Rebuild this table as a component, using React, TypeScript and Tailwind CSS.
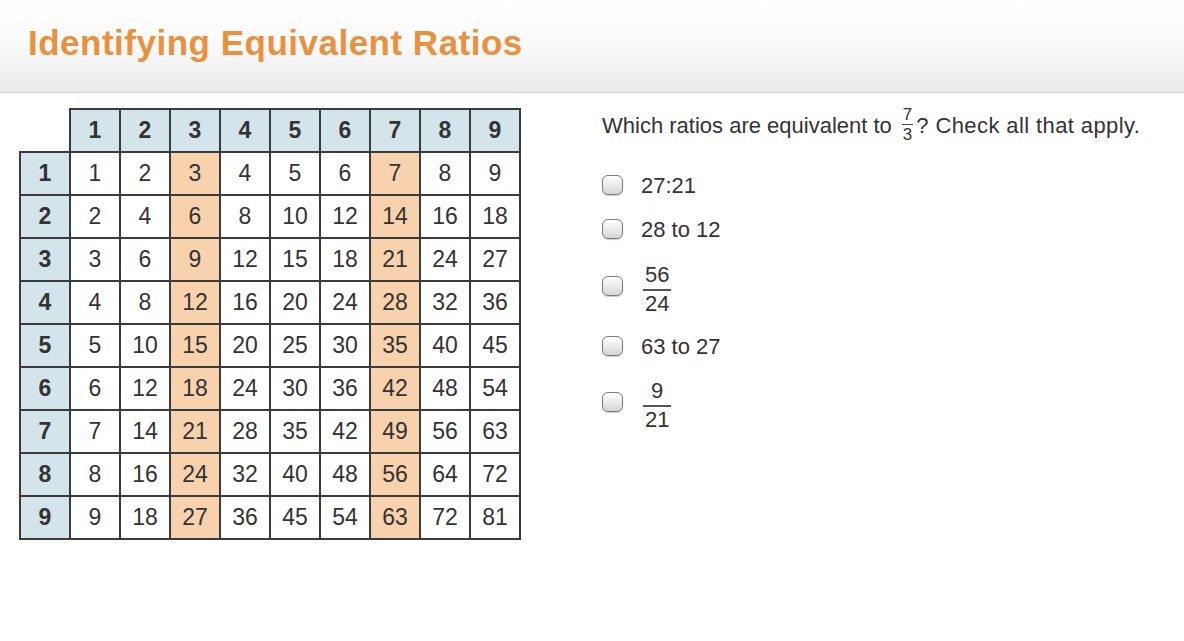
import React from "react";

const HL = new Set([3, 7]);

function Checkbox() {
  return (
    <div className="w-[21px] h-[20px] rounded-[6px] border border-[#7d7d7d] bg-gradient-to-b from-[#ffffff] to-[#d6d6d6] shadow-[0_1px_1px_rgba(0,0,0,0.2)] shrink-0" />
  );
}

function Frac({ n, d }: { n: string; d: string }) {
  return (
    <span className="inline-flex flex-col items-center leading-[22px]">
      <span className="px-[2px] pb-[3px]">{n}</span>
      <span className="px-[2px] pt-[2px] border-t-2 border-[#555] self-stretch text-center">{d}</span>
    </span>
  );
}

export default function App() {
  const nums = [1, 2, 3, 4, 5, 6, 7, 8, 9];
  return (
    <div
      className="w-[1184px] h-[641px] bg-white text-[#333]"
      style={{ fontFamily: '"Liberation Sans", Arial, sans-serif' }}
    >
      <div className="h-[93px] bg-gradient-to-b from-[#ffffff] via-[#fafafa] to-[#e9e9e9] border-b border-[#cfcfcf] flex items-start">
        <h1 className="ml-[28px] mt-[23px] text-[35px] leading-[40px] font-bold text-[#e8923f] tracking-[0.5px]">
          Identifying Equivalent Ratios
        </h1>
      </div>
      <div className="flex">
        <div className="ml-[19px] mt-[15px]">
          <table className="border-collapse table-fixed text-[23px]">
            <tbody>
              <tr className="h-[43px]">
                <td className="w-[50px] p-0" />
                {nums.map((c) => (
                  <td
                    key={c}
                    className="w-[50px] p-0 border-2 border-[#3b3b3b] bg-[#d3e4ea] text-center font-bold"
                  >
                    {c}
                  </td>
                ))}
              </tr>
              {nums.map((r) => (
                <tr key={r} className="h-[43px]">
                  <td className="p-0 border-2 border-[#3b3b3b] bg-[#d3e4ea] text-center font-bold">
                    {r}
                  </td>
                  {nums.map((c) => (
                    <td
                      key={c}
                      className={
                        "p-0 border-2 border-[#3b3b3b] text-center " +
                        (HL.has(c) ? "bg-[#f8d1ad]" : "bg-white")
                      }
                    >
                      {r * c}
                    </td>
                  ))}
                </tr>
              ))}
            </tbody>
          </table>
        </div>
        <div className="ml-[81px] mt-[7px] text-[22px] text-[#333]">
          <div className="flex items-center h-[50px]">
            <span>Which ratios are equivalent to</span>
            <span className="inline-flex flex-col items-center text-[17px] leading-[16px] ml-[10px] mr-[3px]">
              <span className="px-[1px] pb-[1px]">7</span>
              <span className="px-[1px] pt-[2px] border-t border-[#444]">3</span>
            </span>
            <span className="tracking-[0.4px]">? Check all that apply.</span>
          </div>
          <div className="flex flex-col mt-[15px]">
            <div className="flex items-center h-[40px]">
              <Checkbox />
              <span className="ml-[18px]">27:21</span>
            </div>
            <div className="flex items-center h-[48px]">
              <Checkbox />
              <span className="ml-[18px]">28 to 12</span>
            </div>
            <div className="flex items-center h-[66px]">
              <Checkbox />
              <span className="ml-[20px]">
                <Frac n="56" d="24" />
              </span>
            </div>
            <div className="flex items-center h-[54px]">
              <Checkbox />
              <span className="ml-[18px]">63 to 27</span>
            </div>
            <div className="flex items-center h-[58px]">
              <Checkbox />
              <span className="ml-[20px]">
                <Frac n="9" d="21" />
              </span>
            </div>
          </div>
        </div>
      </div>
    </div>
  );
}
